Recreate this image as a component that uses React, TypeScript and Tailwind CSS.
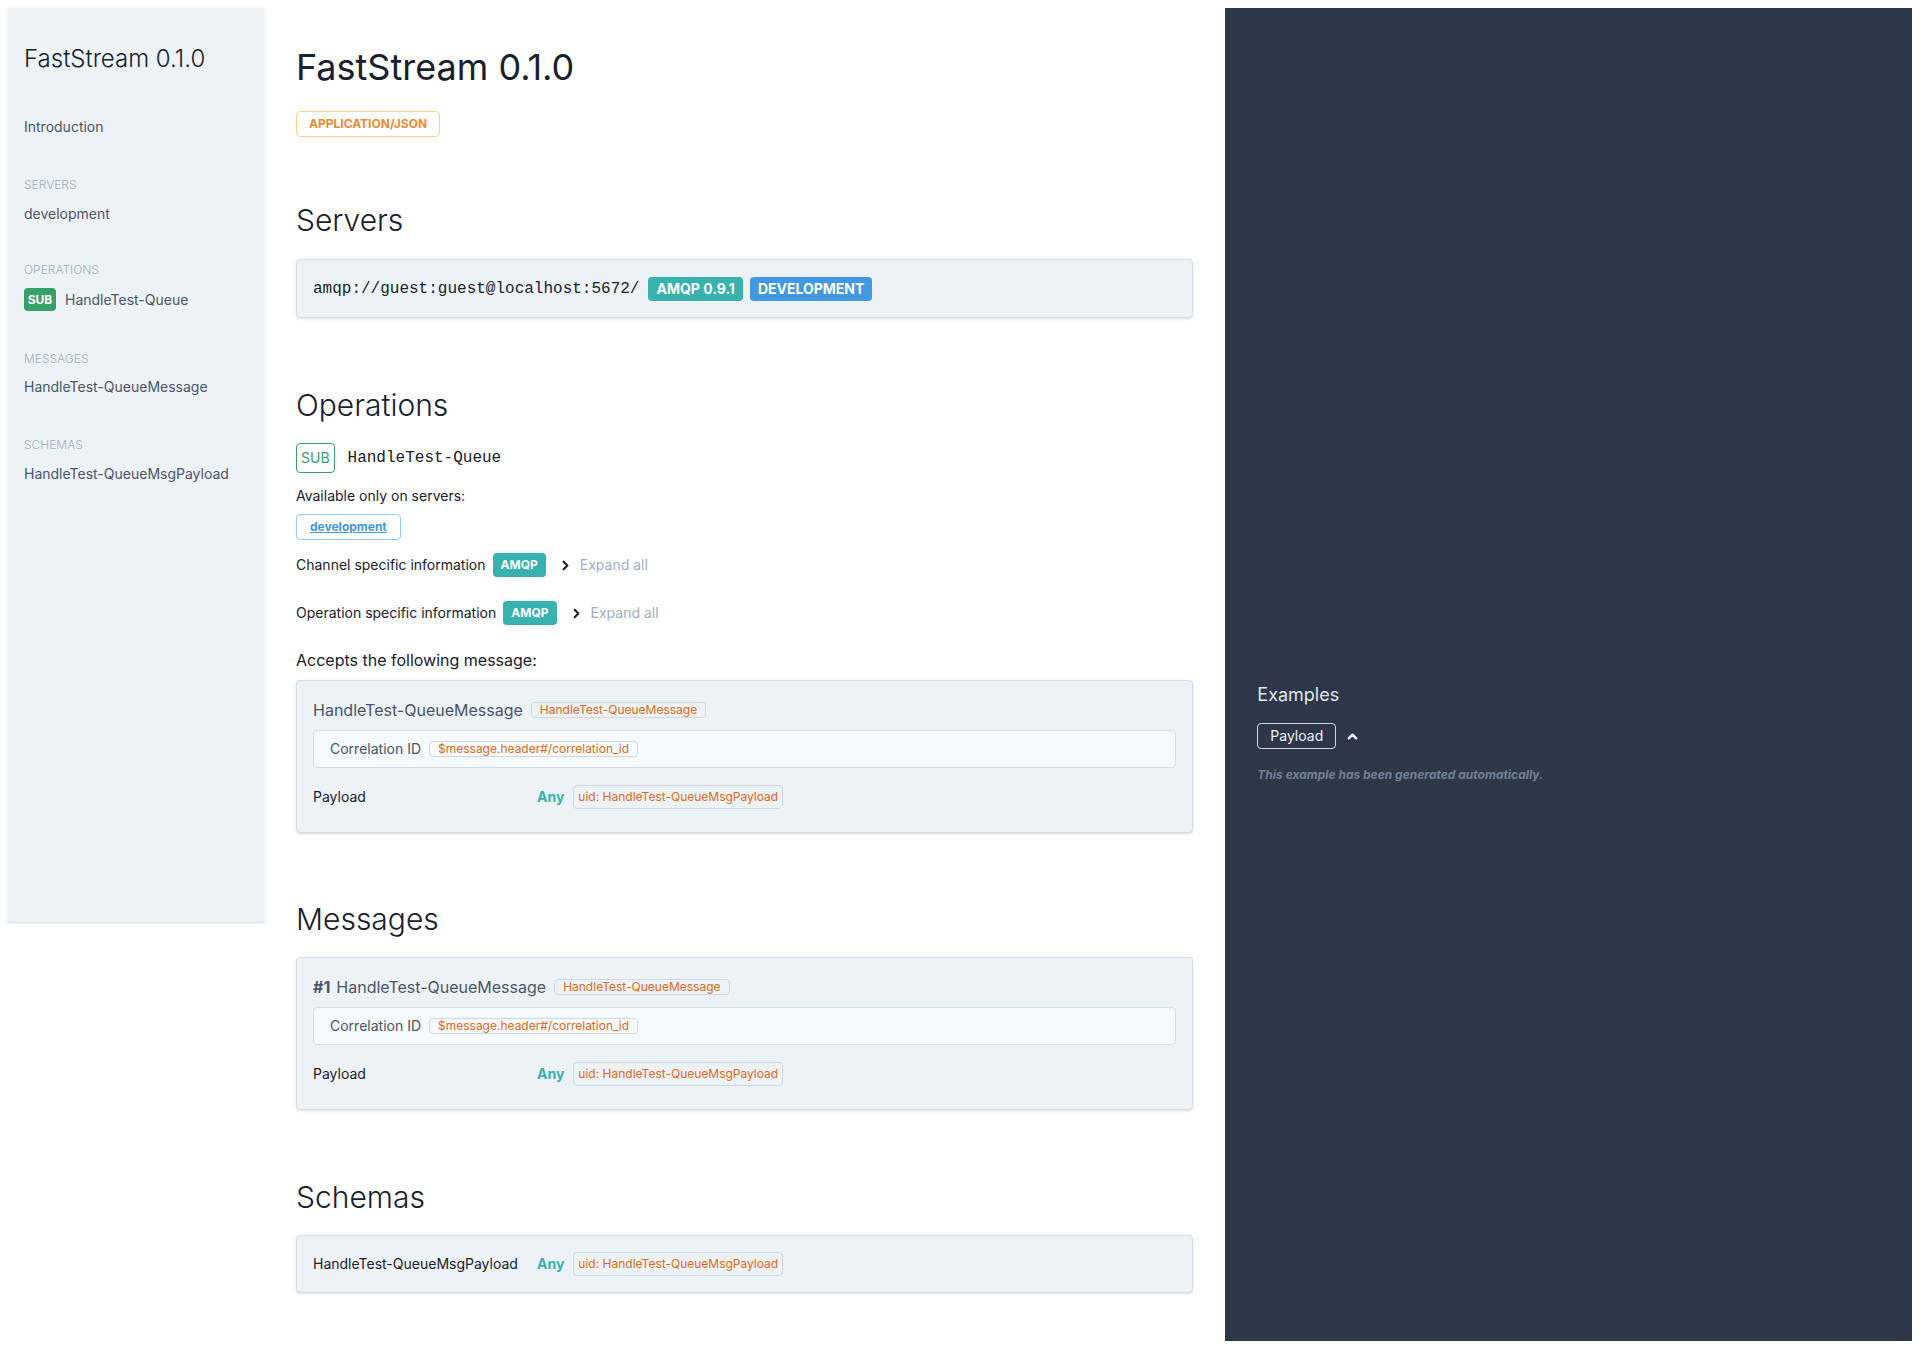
import React from 'react';
import { ChevronRight, ChevronUp } from 'lucide-react';

const SideLabel: React.FC<{ children: React.ReactNode; className?: string }> = ({ children, className = '' }) => (
  <div className={`text-[12px] leading-4 font-light uppercase text-[#a0aec0] ${className}`}>{children}</div>
);

const SideItem: React.FC<{ children: React.ReactNode; className?: string }> = ({ children, className = '' }) => (
  <div className={`text-sm leading-5 text-[#4a5568] ${className}`}>{children}</div>
);

const Sidebar: React.FC = () => (
  <aside className="w-64 h-[914px] shrink-0 bg-[#edf2f7] shadow-sm px-4 pt-[35px]">
    <h1 className="text-2xl leading-8 font-light text-[#1a202c]">FastStream 0.1.0</h1>
    <SideItem className="mt-[42px]">Introduction</SideItem>

    <SideLabel className="mt-10">Servers</SideLabel>
    <SideItem className="mt-[11px]">development</SideItem>

    <SideLabel className="mt-[38px]">Operations</SideLabel>
    <div className="mt-[10px] flex items-center gap-[9px]">
      <span className="bg-[#38a169] text-white text-xs font-bold rounded px-[5px] h-[23px] w-8 flex items-center justify-center">SUB</span>
      <span className="text-sm text-[#4a5568]">HandleTest-Queue</span>
    </div>

    <SideLabel className="mt-10">Messages</SideLabel>
    <SideItem className="mt-[10px]">HandleTest-QueueMessage</SideItem>

    <SideLabel className="mt-10">Schemas</SideLabel>
    <SideItem className="mt-[11px]">HandleTest-QueueMsgPayload</SideItem>
  </aside>
);

const OrangeTag: React.FC<{ children: React.ReactNode; className?: string }> = ({ children, className = '' }) => (
  <span className={`border border-[#cfd8e2] rounded text-[#dd6b20] text-xs ${className}`}>{children}</span>
);

const SectionTitle: React.FC<{ children: React.ReactNode }> = ({ children }) => (
  <h2 className="text-[30px] leading-9 font-light text-[#1a202c]">{children}</h2>
);

const Row: React.FC<{ left: React.ReactNode; right?: React.ReactNode; leftClass?: string }> = ({ left, right, leftClass = '' }) => (
  <div className="flex">
    <div className={`w-7/12 px-8 ${leftClass}`}>{left}</div>
    <div className="w-5/12 bg-[#2d3748] px-8">{right}</div>
  </div>
);

const SchemaRow: React.FC<{ name: string }> = ({ name }) => (
  <div className="flex items-center">
    <div className="w-[216px] mr-2 text-sm text-[#1a202c]">{name}</div>
    <span className="text-sm font-bold text-[#38b2ac]">Any</span>
    <OrangeTag className="ml-[9px] px-1 py-[3px] leading-4">uid: HandleTest-QueueMsgPayload</OrangeTag>
  </div>
);

const MessageCard: React.FC<{ index?: number }> = ({ index }) => (
  <div className="bg-[#edf2f7] border border-[#d5dde6] rounded shadow-sm px-4 pt-[17px] pb-[23px]">
    <div className="flex items-center">
      <span className="text-base leading-6 text-[#4a5568]">
        {index !== undefined && <span className="font-bold mr-[6px]">#{index}</span>}
        HandleTest-QueueMessage
      </span>
      <OrangeTag className="ml-2 px-2 leading-[14px]">HandleTest-QueueMessage</OrangeTag>
    </div>
    <div className="mt-2 bg-[#f7fafc] border border-[#d5dde6] rounded px-4 py-2 flex items-center">
      <span className="text-sm leading-5 text-[#4a5568]">Correlation ID</span>
      <OrangeTag className="ml-2 px-2 leading-[14px]">$message.header#/correlation_id</OrangeTag>
    </div>
    <div className="mt-[17px]">
      <SchemaRow name="Payload" />
    </div>
  </div>
);

const Examples: React.FC = () => (
  <div className="pt-[1px]">
    <h3 className="text-lg leading-7 text-[#e2e8f0]">Examples</h3>
    <div className="mt-[14px] flex items-center">
      <span className="border border-[#cbd5e0] rounded text-sm leading-5 text-[#edf2f7] px-3 py-[2px]">Payload</span>
      <ChevronUp size={15} strokeWidth={3.5} className="ml-[9px] text-white" />
    </div>
    <p className="mt-[18px] text-xs leading-4 font-bold italic text-[#718096]">This example has been generated automatically.</p>
  </div>
);

const BindingRow: React.FC<{ label: string; className?: string }> = ({ label, className = '' }) => (
  <div className={`flex items-center text-sm ${className}`}>
    <span className="text-[#1a202c]">{label}</span>
    <span className="ml-[7px] bg-[#38b2ac] text-white text-xs leading-4 font-bold rounded px-2 py-1">AMQP</span>
    <ChevronRight size={15} strokeWidth={3.5} className="ml-[12px] text-[#1a202c]" />
    <span className="ml-[7px] text-[#a0aec0]">Expand all</span>
  </div>
);

const Main: React.FC = () => (
  <main className="flex-1 flex flex-col">
    <Row
      leftClass="pt-[37px]"
      left={
        <>
          <h1 className="text-4xl leading-[44px] text-[#1a202c]">FastStream 0.1.0</h1>
          <span className="inline-block mt-[22px] border border-[#fbd38d] rounded text-[#ed8936] text-xs leading-4 font-bold uppercase px-3 py-1">
            application/json
          </span>
        </>
      }
    />

    <Row
      leftClass="pt-[65px]"
      left={
        <>
          <SectionTitle>Servers</SectionTitle>
          <div className="mt-[21px] bg-[#edf2f7] border border-[#d5dde6] rounded shadow-sm px-4 pt-[17px] pb-4 flex items-center">
            <span className="font-['Liberation_Mono',monospace] text-base text-[#1a202c]">amqp://guest:guest@localhost:5672/</span>
            <span className="ml-[9px] bg-[#38b2ac] text-white text-sm leading-5 font-bold rounded px-2 py-[2px]">AMQP 0.9.1</span>
            <span className="ml-[7px] bg-[#4299e1] text-white text-sm leading-5 font-bold rounded px-2 py-[2px]">DEVELOPMENT</span>
          </div>
        </>
      }
    />

    <Row
      leftClass="pt-[69px] pb-[8px]"
      left={
        <>
          <SectionTitle>Operations</SectionTitle>
          <div className="mt-5 flex items-center">
            <span className="border border-[#38a169] rounded text-[#38a169] text-sm leading-5 px-1 py-1">SUB</span>
            <span className="ml-[13px] font-['Liberation_Mono',monospace] text-base text-[#1a202c]">HandleTest-Queue</span>
          </div>
          <p className="mt-[13px] text-sm leading-5 text-[#1a202c]">Available only on servers:</p>
          <span className="inline-block mt-2 border border-[#90cdf4] rounded px-[13px] py-1 text-xs leading-4 font-bold text-[#4299e1] underline">
            development
          </span>
          <BindingRow label="Channel specific information" className="mt-[13px]" />
          <BindingRow label="Operation specific information" className="mt-6" />
          <p className="mt-[23px] text-base leading-6 text-[#1a202c]">Accepts the following message:</p>
        </>
      }
    />

    <Row left={<MessageCard />} right={<Examples />} />

    <Row
      leftClass="pt-[68px]"
      left={
        <>
          <SectionTitle>Messages</SectionTitle>
          <div className="mt-5">
            <MessageCard index={1} />
          </div>
        </>
      }
    />

    <Row
      leftClass="pt-[69px] pb-[48px]"
      left={
        <>
          <SectionTitle>Schemas</SectionTitle>
          <div className="mt-5 bg-[#edf2f7] border border-[#d5dde6] rounded shadow-sm p-4">
            <SchemaRow name="HandleTest-QueueMsgPayload" />
          </div>
        </>
      }
    />
  </main>
);

export default function App() {
  return (
    <div className="m-2 flex items-start bg-white font-['Inter',sans-serif]">
      <Sidebar />
      <Main />
    </div>
  );
}
